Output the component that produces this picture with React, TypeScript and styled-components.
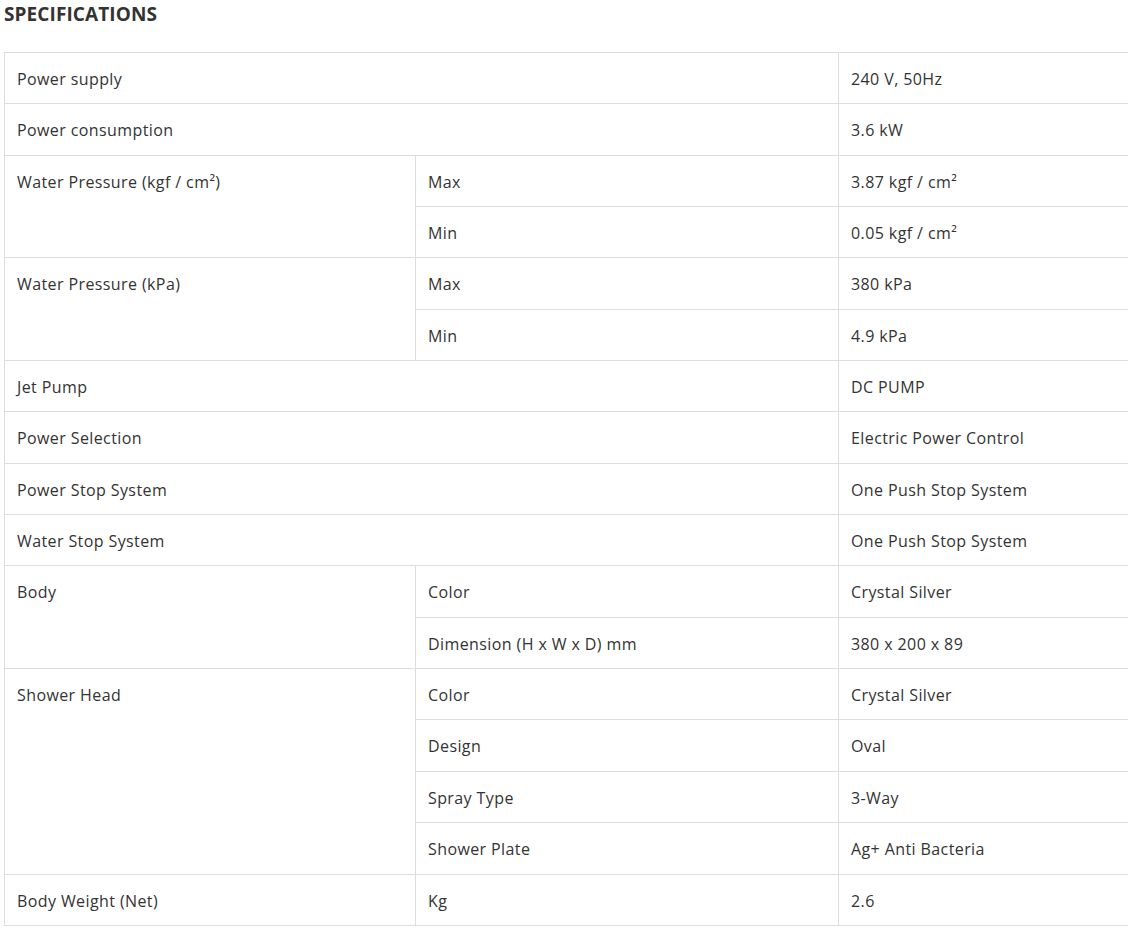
import React, { FC } from 'react';
import styled, { createGlobalStyle } from 'styled-components';

const GlobalStyle = createGlobalStyle`
  html, body {
    margin: 0;
    padding: 0;
    overflow: hidden;
    background: #fff;
  }
  body {
    font-family: "Open Sans", "Liberation Sans", sans-serif;
    color: #333;
  }
`

const StyledWrapper = styled.section`
  padding: 0 0 0 4px;
  width: 1160px;
`

const StyledTitle = styled.h3`
  margin: 0;
  padding-top: 2px;
  height: 50px;
  font-size: 19px;
  line-height: 24px;
  font-weight: 700;
  color: #333;
  letter-spacing: 0.1px;
`

const StyledTable = styled.table`
  border-collapse: collapse;
  table-layout: fixed;
  width: 1140px;
  font-size: 16px;
`

const StyledCell = styled.td`
  border: 1px solid #ddd;
  padding: 13px 12px 11px 12px;
  line-height: 26.35px;
  letter-spacing: 0.4px;
  vertical-align: top;
  color: #333;
  white-space: nowrap;
`

type Row = { label?: string; span?: number; full?: boolean; sub?: string; value: string }

const rows: Row[] = [
  { label: 'Power supply', full: true, value: '240 V, 50Hz' },
  { label: 'Power consumption', full: true, value: '3.6 kW' },
  { label: 'Water Pressure (kgf / cm²)', span: 2, sub: 'Max', value: '3.87 kgf / cm²' },
  { sub: 'Min', value: '0.05 kgf / cm²' },
  { label: 'Water Pressure (kPa)', span: 2, sub: 'Max', value: '380 kPa' },
  { sub: 'Min', value: '4.9 kPa' },
  { label: 'Jet Pump', full: true, value: 'DC PUMP' },
  { label: 'Power Selection', full: true, value: 'Electric Power Control' },
  { label: 'Power Stop System', full: true, value: 'One Push Stop System' },
  { label: 'Water Stop System', full: true, value: 'One Push Stop System' },
  { label: 'Body', span: 2, sub: 'Color', value: 'Crystal Silver' },
  { sub: 'Dimension (H x W x D) mm', value: '380 x 200 x 89' },
  { label: 'Shower Head', span: 4, sub: 'Color', value: 'Crystal Silver' },
  { sub: 'Design', value: 'Oval' },
  { sub: 'Spray Type', value: '3-Way' },
  { sub: 'Shower Plate', value: 'Ag+ Anti Bacteria' },
  { label: 'Body Weight (Net)', sub: 'Kg', value: '2.6' },
]

const App: FC = () => {
  return (
    <>
      <GlobalStyle />
      <StyledWrapper>
        <StyledTitle>SPECIFICATIONS</StyledTitle>
        <StyledTable>
          <colgroup>
            <col style={{ width: 411 }} />
            <col style={{ width: 423 }} />
            <col />
          </colgroup>
          <tbody>
            {rows.map((r, i) => (
              <tr key={i}>
                {r.label && r.full && <StyledCell colSpan={2}>{r.label}</StyledCell>}
                {r.label && !r.full && <StyledCell rowSpan={r.span}>{r.label}</StyledCell>}
                {r.sub && <StyledCell>{r.sub}</StyledCell>}
                <StyledCell>{r.value}</StyledCell>
              </tr>
            ))}
          </tbody>
        </StyledTable>
      </StyledWrapper>
    </>
  )
}

export default App
